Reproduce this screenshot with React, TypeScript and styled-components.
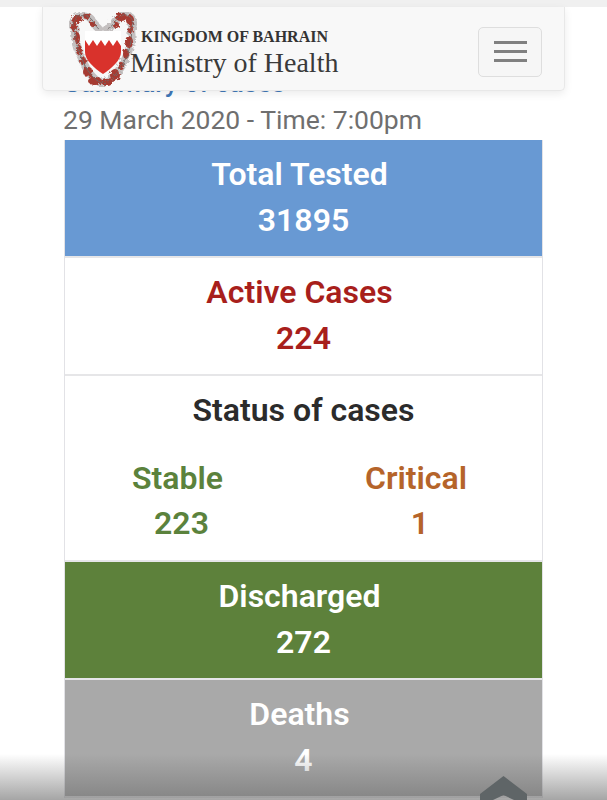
import React from "react"
import styled, { createGlobalStyle } from "styled-components"

const GlobalStyle = createGlobalStyle`
  html, body {
    margin: 0;
    padding: 0;
    background: #fff;
    font-family: Roboto, "Liberation Sans", sans-serif;
  }
`

const Page = styled.div`
  position: relative;
  width: 607px;
  height: 800px;
  overflow: hidden;
  background: #fff;
`

const TopStrip = styled.div`
  position: absolute;
  top: 0;
  left: 0;
  right: 0;
  height: 7px;
  background: #f0f0f0;
`

const Navbar = styled.nav`
  position: absolute;
  top: 7px;
  left: 42px;
  width: 523px;
  height: 84px;
  box-sizing: border-box;
  display: flex;
  align-items: center;
  justify-content: space-between;
  padding: 0 22px 0 26px;
  background: #f8f8f8;
  border: 1px solid #e8e8e8;
  border-top: 0;
  border-radius: 0 0 5px 5px;
  box-shadow: 0 3px 8px rgba(0, 0, 0, 0.08);
  z-index: 2;
`

const Brand = styled.div`
  display: flex;
  align-items: center;
  margin-top: 2px;
`

const BrandText = styled.div`
  display: flex;
  flex-direction: column;
  margin-left: -5px;
  padding-top: 6px;
  font-family: "Liberation Serif", serif;
  color: #333;
`

const Kingdom = styled.span`
  margin-left: 9px;
  font-size: 16px;
  line-height: 18px;
  font-weight: 700;
  white-space: nowrap;
`

const Ministry = styled.span`
  margin-left: -2px;
  margin-top: 2px;
  font-size: 28px;
  line-height: 30px;
  white-space: nowrap;
  color: #3a3a3a;
`

const Toggler = styled.button`
  width: 64px;
  height: 50px;
  margin-top: 6px;
  padding: 0;
  display: flex;
  flex-direction: column;
  align-items: center;
  justify-content: center;
  gap: 6px;
  background: #f6f6f6;
  border: 1px solid #dedede;
  border-radius: 5px;
`

const TogglerBar = styled.span`
  width: 33px;
  height: 3px;
  background: #808080;
`

const Content = styled.main`
  padding: 68px 64px 0;
`

const Heading = styled.h2`
  margin: 0;
  font-size: 26.5px;
  line-height: 30px;
  font-weight: 500;
  color: #3f78b8;
`

const DateLine = styled.p`
  margin: 4px 0 0 -1px;
  font-size: 26.5px;
  line-height: 36px;
  font-weight: 400;
  color: #6f6f6f;
  white-space: nowrap;
`

const Table = styled.div`
  margin-top: 2px;
  border-left: 1px solid #e2e2e6;
  border-right: 1px solid #e2e2e6;
`

const Row = styled.section<{ $bg?: string; $color: string }>`
  height: 118px;
  box-sizing: border-box;
  display: flex;
  flex-direction: column;
  align-items: center;
  padding-top: 11px;
  background: ${(p) => p.$bg || "#fff"};
  color: ${(p) => p.$color};
  border-bottom: 2px solid #e6e6e8;
  font-size: 32px;
  line-height: 46px;
  font-weight: 600;
`

const Label = styled.span`
  padding-right: 8px;
`

const StatusRow = styled.section`
  height: 186px;
  box-sizing: border-box;
  padding-top: 11px;
  background: #fff;
  border-bottom: 2px solid #e6e6e8;
  text-align: center;
`

const StatusTitle = styled.div`
  font-size: 32px;
  line-height: 46px;
  font-weight: 600;
  color: #2b2b2b;
`

const StatusColumns = styled.div`
  display: grid;
  grid-template-columns: 233px 244px;
  margin-top: 23px;
`

const StatusCell = styled.div<{ $color: string }>`
  display: flex;
  flex-direction: column;
  align-items: center;
  color: ${(p) => p.$color};
  font-size: 32px;
  line-height: 45px;
  font-weight: 600;
`

const BottomFade = styled.div`
  position: absolute;
  left: 0;
  right: 0;
  bottom: 0;
  height: 46px;
  background: linear-gradient(rgba(110, 110, 110, 0), rgba(110, 110, 110, 0.62));
  z-index: 1;
`

const ScrollTop = styled.svg`
  position: absolute;
  left: 480px;
  top: 776px;
  z-index: 3;
`

const mantling = [
  "M4 14C3 6 12 2 18 4 24 6 24 13 30 17",
  "M38 17C46 14 46 5 54 3 62 2 66 9 63 16",
  "M6 16C5 27 9 38 13 47 17 57 24 68 33 71",
  "M62 16C64 27 60 40 55 50 49 61 42 69 33 71",
]

const blotches = [
  [8, 7, 6, 4],
  [18, 4, 4, 3],
  [24, 12, 3, 3],
  [5, 15, 3, 5],
  [52, 5, 6, 4],
  [61, 8, 4, 5],
  [47, 13, 3, 3],
  [62, 18, 3, 4],
  [8, 26, 3, 6],
  [10, 38, 3, 5],
  [14, 49, 3, 4],
  [19, 60, 5, 5],
  [26, 69, 7, 4],
  [60, 30, 4, 6],
  [57, 42, 3, 5],
  [52, 54, 3, 4],
  [46, 63, 5, 6],
  [38, 70, 6, 4],
]

function Crest() {
  return (
    <svg width="68" height="75" viewBox="0 0 68 75" style={{ flex: "none" }}>
      <defs>
        <filter id="rough" x="-10%" y="-10%" width="120%" height="120%">
          <feTurbulence type="fractalNoise" baseFrequency="0.35" numOctaves="2" seed="4" />
          <feDisplacementMap in="SourceGraphic" scale="5" />
          <feGaussianBlur stdDeviation="0.35" />
        </filter>
      </defs>
      <g filter="url(#rough)">
        {mantling.map((d) => (
          <path key={d} d={d} fill="none" stroke="#c4c0c0" strokeWidth="8" strokeLinecap="round" />
        ))}
        {blotches.map(([cx, cy, rx, ry]) => (
          <ellipse key={`${cx}-${cy}`} cx={cx} cy={cy} rx={rx} ry={ry} fill="#a63a31" />
        ))}
        {mantling.map((d) => (
          <path key={d} d={d} fill="none" stroke="#6f6a68" strokeWidth="0.9" />
        ))}
      </g>
      <path d="M16 19H52V40C52 48 43 56 34 62 25 56 16 48 16 40z" fill="#d9322c" />
      <path
        d="M16 19H52V34L48 28 44 34 40 28 36 34 32 28 28 34 24 28 20 34 16 28z"
        fill="#fff"
      />
    </svg>
  )
}

export default function App() {
  return (
    <Page>
      <GlobalStyle />
      <TopStrip />
      <Navbar>
        <Brand>
          <Crest />
          <BrandText>
            <Kingdom>KINGDOM OF BAHRAIN</Kingdom>
            <Ministry>Ministry of Health</Ministry>
          </BrandText>
        </Brand>
        <Toggler aria-label="Menu">
          <TogglerBar />
          <TogglerBar />
          <TogglerBar />
        </Toggler>
      </Navbar>
      <Content>
        <Heading>Summary of cases</Heading>
        <DateLine>29 March 2020 - Time: 7:00pm</DateLine>
        <Table>
          <Row $bg="#6899d3" $color="#fff">
            <Label>Total Tested</Label>
            <span>31895</span>
          </Row>
          <Row $color="#a81f1c">
            <Label>Active Cases</Label>
            <span>224</span>
          </Row>
          <StatusRow>
            <StatusTitle>Status of cases</StatusTitle>
            <StatusColumns>
              <StatusCell $color="#5b823c">
                <Label>Stable</Label>
                <span>223</span>
              </StatusCell>
              <StatusCell $color="#b5642a">
                <Label>Critical</Label>
                <span>1</span>
              </StatusCell>
            </StatusColumns>
          </StatusRow>
          <Row $bg="#5d813b" $color="#fff">
            <Label>Discharged</Label>
            <span>272</span>
          </Row>
          <Row $bg="#a9a9a9" $color="#fff">
            <Label>Deaths</Label>
            <span>4</span>
          </Row>
        </Table>
      </Content>
      <BottomFade />
      <ScrollTop width="47" height="24" viewBox="0 0 47 24">
        <path d="M0 24V18L23.5 0 47 18v6H34L23.5 19 13 24z" fill="#5f6567" />
      </ScrollTop>
    </Page>
  )
}
